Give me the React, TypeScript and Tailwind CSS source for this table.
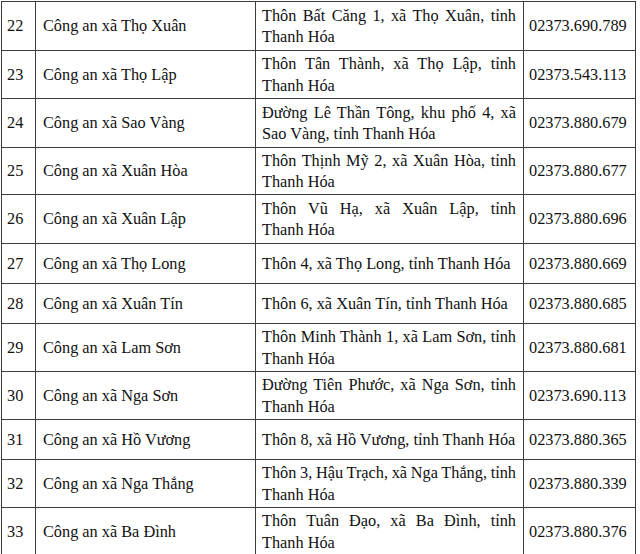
const rows = [
  { no: "22", name: "Công an xã Thọ Xuân", addr: ["Thôn Bất Căng 1, xã Thọ Xuân, tỉnh", "Thanh Hóa"], phone: "02373.690.789", h: "h-[49px]" },
  { no: "23", name: "Công an xã Thọ Lập", addr: ["Thôn Tân Thành, xã Thọ Lập, tỉnh", "Thanh Hóa"], phone: "02373.543.113", h: "h-[48px]" },
  { no: "24", name: "Công an xã Sao Vàng", addr: ["Đường Lê Thần Tông, khu phố 4, xã", "Sao Vàng, tỉnh Thanh Hóa"], phone: "02373.880.679", h: "h-[49px]" },
  { no: "25", name: "Công an xã Xuân Hòa", addr: ["Thôn Thịnh Mỹ 2, xã Xuân Hòa, tỉnh", "Thanh Hóa"], phone: "02373.880.677", h: "h-[47px]" },
  { no: "26", name: "Công an xã Xuân Lập", addr: ["Thôn Vũ Hạ, xã Xuân Lập, tỉnh", "Thanh Hóa"], phone: "02373.880.696", h: "h-[49px]" },
  { no: "27", name: "Công an xã Thọ Long", addr: ["Thôn 4, xã Thọ Long, tỉnh Thanh Hóa"], phone: "02373.880.669", h: "h-[40px]" },
  { no: "28", name: "Công an xã Xuân Tín", addr: ["Thôn 6, xã Xuân Tín, tỉnh Thanh Hóa"], phone: "02373.880.685", h: "h-[40px]" },
  { no: "29", name: "Công an xã Lam Sơn", addr: ["Thôn Minh Thành 1, xã Lam Sơn, tỉnh", "Thanh Hóa"], phone: "02373.880.681", h: "h-[48px]" },
  { no: "30", name: "Công an xã Nga Sơn", addr: ["Đường Tiên Phước, xã Nga Sơn, tỉnh", "Thanh Hóa"], phone: "02373.690.113", h: "h-[48px]" },
  { no: "31", name: "Công an xã Hồ Vương", addr: ["Thôn 8, xã Hồ Vương, tỉnh Thanh Hóa"], phone: "02373.880.365", h: "h-[40px]" },
  { no: "32", name: "Công an xã Nga Thắng", addr: ["Thôn 3, Hậu Trạch, xã Nga Thắng, tỉnh", "Thanh Hóa"], phone: "02373.880.339", h: "h-[48px]" },
  { no: "33", name: "Công an xã Ba Đình", addr: ["Thôn Tuân Đạo, xã Ba Đình, tỉnh", "Thanh Hóa"], phone: "02373.880.376", h: "h-[48px]" },
]

// Shared cell look: right + bottom rule, vertically centered content
const cell = "flex items-center border-r border-b border-[#3c3c3c]"

export default function App() {
  return (
    <div className="min-h-[554px] bg-white overflow-hidden font-['Liberation_Serif','Times_New_Roman',serif] text-[16.3px] leading-[21.5px] text-[#111]">
      <div className="ml-px mt-px grid w-[635px] grid-cols-[34px_220px_268px_112px] border-l border-t border-[#3c3c3c]">
        {rows.map((r) => (
          <div key={r.no} className="contents">
            <div className={`${cell} ${r.h} pl-[5px]`}>{r.no}</div>
            <div className={`${cell} ${r.h} pl-[7px]`}>{r.name}</div>
            <div className={`${cell} ${r.h} pl-[6px] pr-[7px]`}>
              {r.addr.length > 1 ? (
                <div className="w-full">
                  {/* first line spread edge to edge like Word's justified paragraph */}
                  <p className="whitespace-nowrap text-justify [text-align-last:justify] [word-spacing:-0.5px]">{r.addr[0]}</p>
                  <p>{r.addr[1]}</p>
                </div>
              ) : (
                <p className="whitespace-nowrap">{r.addr[0]}</p>
              )}
            </div>
            <div className={`${cell} ${r.h} pl-[5px]`}>{r.phone}</div>
          </div>
        ))}
      </div>
    </div>
  )
}
